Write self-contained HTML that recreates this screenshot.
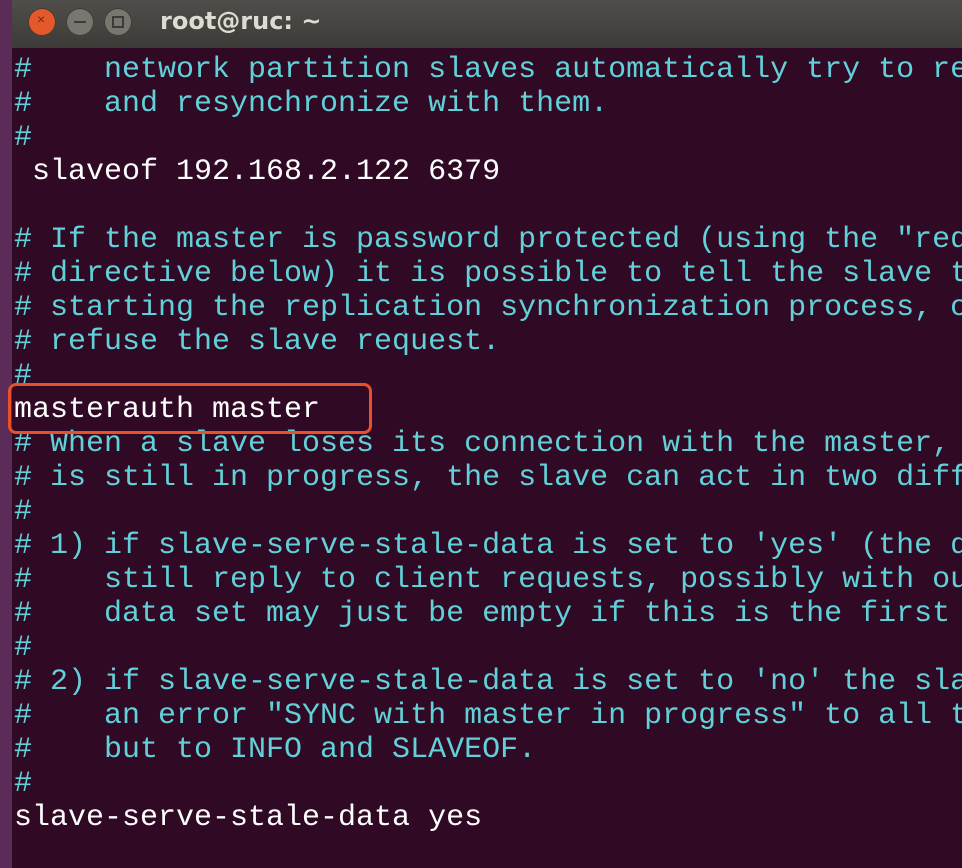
<!DOCTYPE html>
<html><head><style>
html,body{margin:0;padding:0;width:962px;height:868px;overflow:hidden;background:#300a24;}
#side{position:absolute;left:0;top:0;width:12px;height:868px;background:#5b2c57;}
#title{position:absolute;left:12px;top:0;width:950px;height:48px;background:linear-gradient(#4f4e4a,#3c3b37);}
.btn{position:absolute;top:8px;width:28px;height:28px;border-radius:50%;background:#77766f;box-shadow:inset 0 0 0 1px #3a3935;}
#t{position:absolute;left:160px;top:7px;font:bold 24px "DejaVu Sans","Liberation Sans",sans-serif;color:#dfdbd2;}
#wrap{position:absolute;left:12px;top:48px;width:950px;height:820px;overflow:hidden;}
#term{position:absolute;left:2px;top:5px;margin:0;font:30px/34px "Liberation Mono",monospace;color:#fff;white-space:pre;}
.c{color:#62d0d8;}
#box{position:absolute;left:8px;top:383px;width:358px;height:45px;border:3px solid #e8502a;border-radius:8px;}
</style></head><body>
<div id="side"></div>
<div id="title">
<div class="btn" style="left:16px;background:#e3592b"><span style="position:absolute;left:9px;top:3px;font:14px sans-serif;color:#7a2a10">×</span></div>
<div class="btn" style="left:54px"><div style="position:absolute;left:8px;top:13px;width:12px;height:2px;background:#3c3b37"></div></div>
<div class="btn" style="left:92px"><div style="position:absolute;left:8px;top:8px;width:8px;height:8px;border:2px solid #3c3b37"></div></div>
</div>
<div id="t">root@ruc: ~</div>
<div id="wrap"><pre id="term"><span class="c">#    network partition slaves automatically try to reconnect
#    and resynchronize with them.
#</span>
 slaveof 192.168.2.122 6379

<span class="c"># If the master is password protected (using the "requirepass" configuration
# directive below) it is possible to tell the slave to authenticate before
# starting the replication synchronization process, otherwise the master will
# refuse the slave request.
#</span>
masterauth master
<span class="c"># When a slave loses its connection with the master, or when the replication
# is still in progress, the slave can act in two different ways:
#
# 1) if slave-serve-stale-data is set to 'yes' (the default) the slave will
#    still reply to client requests, possibly with out of date data, or the
#    data set may just be empty if this is the first synchronization.
#
# 2) if slave-serve-stale-data is set to 'no' the slave will reply with
#    an error "SYNC with master in progress" to all the kind of commands
#    but to INFO and SLAVEOF.
#</span>
slave-serve-stale-data yes</pre></div>
<div id="box"></div>
</body></html>
